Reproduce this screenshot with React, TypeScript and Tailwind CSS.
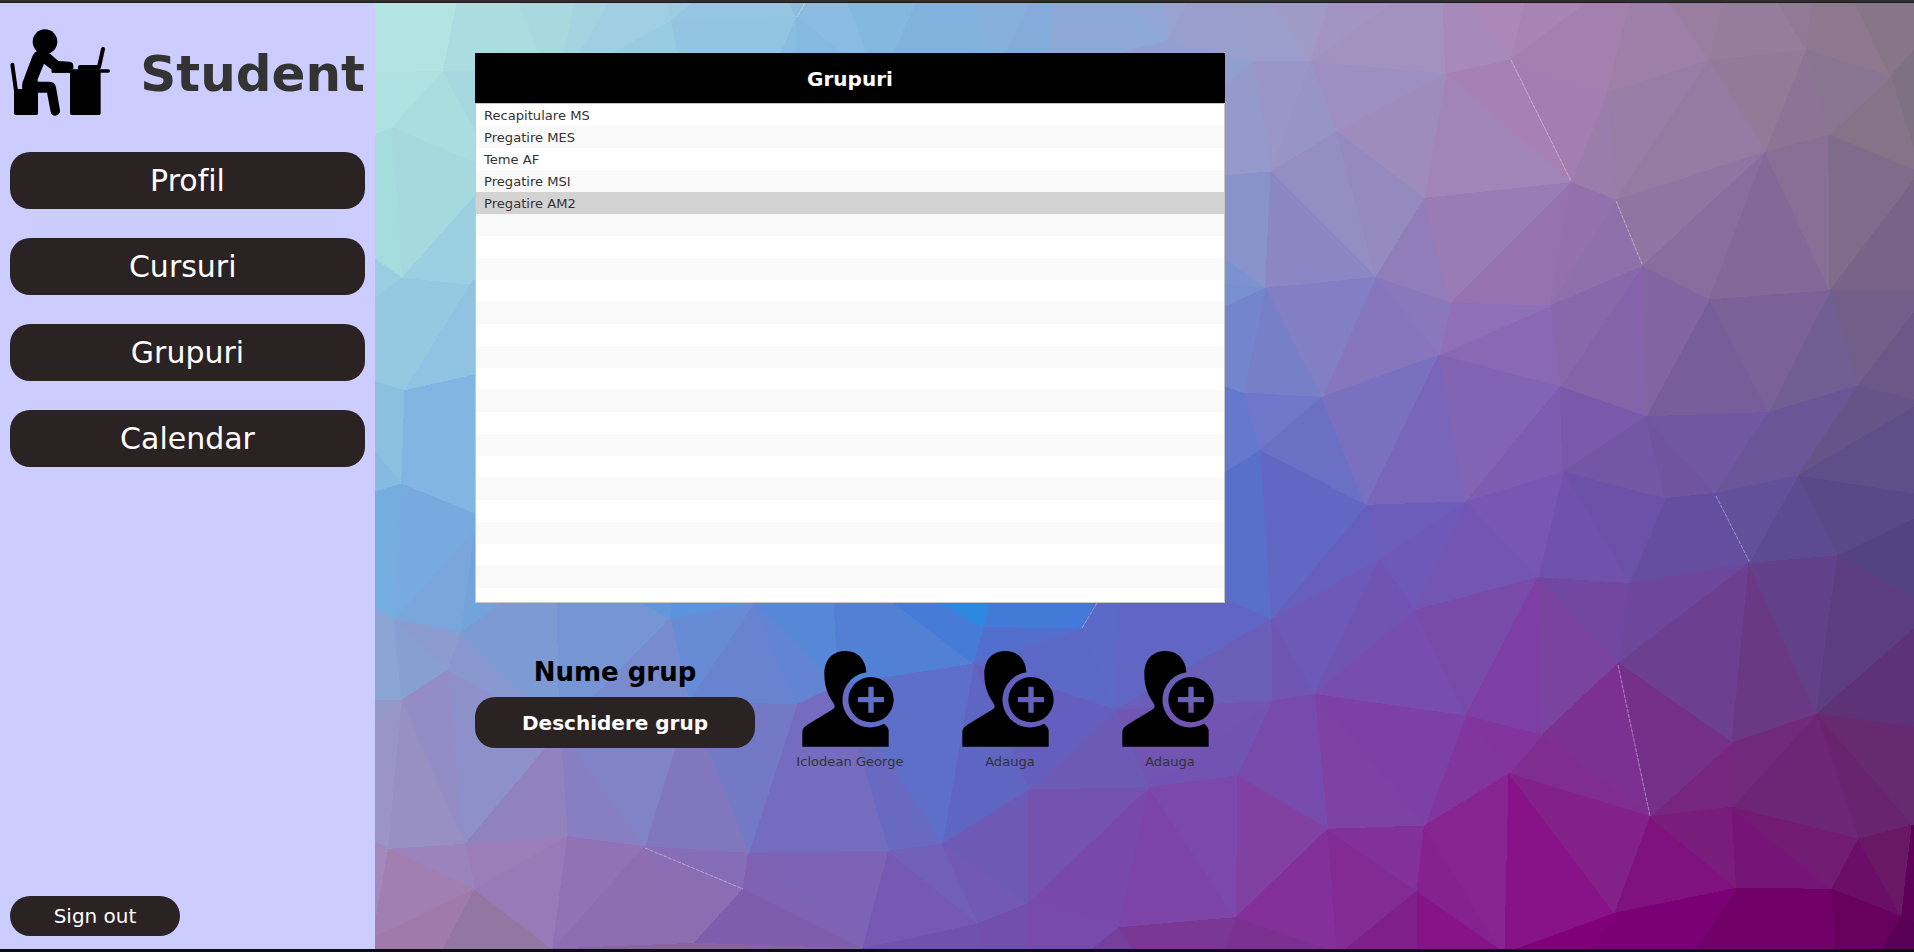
import React from "react";

type Facet = [color: string, corners: string];

/* Named mesh vertices. */
const V: Record<string, string> = {
  a0: "1253,61", a1: "1310.7,62", a2: "1336.4,131.7", a3: "1271,172", a4: "1445.8,74",
  a5: "1424.5,198.3", a6: "1511,60", a7: "1571,182.7", a8: "1607.3,92.7", a9: "1616.2,200",
  a10: "1709,60.7", a11: "1765.4,152.3", a12: "1806.5,50", a13: "1828.7,135", a14: "1890.6,76.7",
  a15: "1830,290.7", a16: "1709,300", a17: "1641.9,266.7", a18: "1549.8,306", a19: "1451,303.3",
  a20: "1375.8,277.3", a21: "1265.6,288.3", a22: "1439,355", a23: "1560,386.7", a24: "1645.8,416.7",
  a25: "1768,412.7", a26: "1857.4,386", a27: "1321.8,397.3", a28: "1243,393.3", a29: "1259.8,450.7",
  b1: "1563,472", b2: "1366,505.3", b3: "1465.7,502", b4: "1379.4,559.3", b5: "1270.9,619.3",
  b6: "1414.8,610.3", b7: "1537.8,577.7", b8: "1629.5,583.7", b9: "1664.9,498.7", b10: "1715.8,493.3",
  b11: "1749,563.3", b12: "1797.7,476", b13: "1837.5,556", b14: "1618.4,663.3", b15: "1314.3,694.3",
  b16: "1271.8,701", b17: "1465.7,716", b18: "1541.8,735.3", b19: "1732,742.7", b20: "1816.3,714.3",
  b21: "1509,773.7", b22: "1424.5,826", b23: "1327.6,829.3", b24: "1236.8,776", b25: "1650.3,816.7",
  b26: "1732,807", b27: "1858.3,839.3", b28: "1912,825", b29: "1614.9,913.3", b30: "1736.6,888.3",
  b31: "1831.8,889.3", b32: "1901.7,916.7", b33: "1417,891", b34: "1235.5,917.7",
  c1: "394,620", c2: "461.2,632.7", c3: "447.8,670", c4: "402,700", c5: "670.3,618.7",
  c6: "755,603", c7: "984,627.7", c8: "1082.6,628.7", c9: "973.6,664", c10: "797,704.7",
  c11: "1116.5,710", c12: "1028.7,790", c13: "1149.4,787.7", c14: "942,844.3", c15: "888.6,851.3",
  c16: "748.5,853.3", c17: "644.5,846.7", c18: "567.4,836.7", c19: "465,844.3", c20: "388.5,849.3",
  c21: "474.7,889.3", c22: "743,889.3", c23: "1028.7,903.3", c24: "978.6,923.7", c25: "1118.7,927.7",
  c26: "694,943.3", c27: "862.7,949", c28: "552.8,949", c29: "560,731", c30: "689,702", c31: "838.5,685",
  d1: "443.3,71.4", d2: "391.7,127.8", d3: "401.7,278.4", d4: "470,285", d5: "405,390.6", d6: "401.7,484",
  e1: "671.7,20.7", e2: "796.7,17.3", f1: "1169,40",
};

const facets: Facet[] = [
  // top left
  ["#b2e5e1", "375,3 457,3 d1 375,73"],
  ["#aee2e0", "375,73 d1 d2 375,135"],
  ["#abdde0", "457,3 519,3 541,60 475,73 d1"],
  ["#aaddde", "d1 475,131 475,163 d2"],
  ["#a5d9df", "d1 480,72 480,140"],
  ["#a5d9de", "d2 475,163 475,196 d3"],
  ["#a6dcde", "375,135 d2 d3 375,259"],
  ["#99cee2", "375,259 d3 375,298"],
  ["#9bd0e2", "d3 475,196 475,285 d4"],
  ["#95c9e1", "375,298 d3 d4 d5 375,382"],
  ["#8fc3e1", "d4 475,279 475,375 d5"],
  ["#8bc0e0", "375,382 d5 d6 375,452"],
  ["#86bae0", "375,452 d6 375,492"],
  ["#82b5e1", "d5 475,375 475,514 d6"],
  ["#76addf", "375,492 d6 c1 375,608"],
  ["#77abdf", "d6 475,514 475,530 c1"],
  ["#7ba6db", "c1 475,530 c2"],
  ["#72a3dc", "c2 475,530 505,603"],
  // top edge
  ["#a8d9df", "519,3 575,3 563,60 541,60"],
  ["#a5d4e1", "575,3 609,3 575,60 563,60"],
  ["#a0cfe1", "609,3 666,3 e1 605,60 575,60"],
  ["#9bcce0", "666,3 692,3 e1"],
  ["#99cce0", "e1 600,60 679,60"],
  ["#95c5e1", "692,3 789,3 e2 e1"],
  ["#93c4e2", "e1 e2 778,60 679,60"],
  ["#8cbde0", "789,3 805,3 e2"],
  ["#8bbbe1", "805,3 848,3 870,60 851,60 e2"],
  ["#8bbce1", "e2 778,60 796,60"],
  ["#86b9e0", "e2 796,60 851,60"],
  ["#85b8df", "848,3 916,3 891,60 870,60"],
  ["#81b2de", "916,3 976,3 988,60 891,60"],
  ["#86afdc", "976,3 1030,3 1003,60 988,60"],
  ["#84abd9", "1030,3 1054,3 1051,60 1003,60"],
  ["#8ca8d6", "1054,3 1130,3 f1 1115,60 1051,60"],
  ["#93a5d4", "1130,3 1166,3 f1"],
  ["#9aa2d0", "1166,3 1187,3 f1"],
  ["#989fcd", "f1 1187,3 1238,3 a0 1225,60"],
  ["#929fd1", "f1 1115,55 1225,56"],
  // right, upper band
  ["#9b9dca", "1238,3 1272,3 a1 a0"],
  ["#a09ac6", "1272,3 1329,3 a1"],
  ["#a494c4", "1329,3 1392,3 a1"],
  ["#a391bf", "1392,3 1443,3 a4 a1"],
  ["#a78aba", "1443,3 1470,3 a6 a4"],
  ["#ac88b7", "1470,3 1525,3 a6"],
  ["#a884b2", "1525,3 1586,3 a6"],
  ["#a480ae", "1586,3 1630,3 a8 a6"],
  ["#9d7fa7", "1630,3 1670,3 a10 a8"],
  ["#997e9f", "1670,3 1724,3 a10"],
  ["#967d9c", "1724,3 1778,3 a12 a10"],
  ["#917a96", "1778,3 1812,3 a12"],
  ["#8e788e", "1812,3 1855,3 a14 a12"],
  ["#877688", "1855,3 1914,3 1914,50 a14"],
  ["#7e7282", "a14 1914,50 1914,150"],
  ["#857388", "a14 1914,150 1914,170 a13"],
  ["#887591", "a12 a14 a13"],
  ["#927a98", "a10 a12 a11"],
  ["#8c7594", "a12 a13 a11"],
  ["#987da6", "a8 a10 a9"],
  ["#957ba1", "a10 a11 a9"],
  ["#9a7dab", "a7 a8 a9"],
  ["#a37eb0", "a6 a8 a7"],
  ["#a780b4", "a4 a6 a7"],
  ["#a185b8", "a4 a7 a5"],
  ["#9d8fc2", "a1 a4 a2"],
  ["#9e8cbd", "a2 a4 a5"],
  ["#9a96c9", "a0 a1 a3"],
  ["#9794c6", "a1 a2 a3"],
  ["#949acb", "a0 a3 1220,176 1220,85"],
  ["#8f9fd0", "a0 1220,57 1220,88"],
  ["#948ec2", "a2 a3 a20"],
  ["#948abf", "a2 a20 a5"],
  ["#8893cb", "a3 1220,176 1220,258 a21"],
  ["#7c92cf", "a21 1220,256 1220,284"],
  ["#7890d0", "a21 1220,284 1220,309"],
  ["#8b87c4", "a3 a20 a21"],
  ["#917dba", "a5 a20 a19"],
  ["#997cb6", "a5 a19 a7"],
  ["#9673b0", "a7 a19 a18"],
  ["#9271ac", "a7 a18 a9"],
  ["#8f70aa", "a9 a18 a17"],
  ["#9074a1", "a9 a17 a11"],
  ["#896d9c", "a11 a17 a16"],
  ["#836998", "a11 a16 a15"],
  ["#876f95", "a11 a15 a13"],
  ["#7e6c8a", "a13 1914,170 1914,180 a15"],
  ["#796487", "a15 1914,180 1914,290.7"],
  ["#715f8a", "a15 1914,290.7 1914,313 a26"],
  ["#6b5788", "a26 1914,313 1914,400"],
  ["#715e92", "a15 a26 a25"],
  ["#7a6198", "a16 a15 a25"],
  ["#775e9b", "a16 a25 a24"],
  ["#8165a2", "a17 a16 a24"],
  ["#8463a8", "a17 a24 a23"],
  ["#8867ab", "a18 a17 a23"],
  ["#8b68b4", "a18 a23 a22"],
  ["#8e6fb8", "a19 a18 a22"],
  ["#8b78bc", "a20 a19 a22"],
  ["#8576bd", "a20 a22 a27"],
  ["#827fc4", "a21 a20 a27"],
  ["#777fc9", "a21 a27 a28"],
  ["#7076c9", "a28 a27 a29"],
  ["#7585cd", "a21 a28 1220,388 1220,309"],
  ["#6479cc", "a28 a29 1220,476 1220,385"],
  ["#6b70c5", "a27 a29 b2"],
  ["#7970c0", "a27 a22 b2"],
  ["#7965ba", "a22 b3 b2"],
  ["#8264b5", "a22 a23 b3"],
  ["#7e5cb1", "a23 b1 b3"],
  ["#795aaa", "a23 a24 b1"],
  ["#7356a4", "a24 b9 b1"],
  ["#6f559f", "a24 b10 b9"],
  ["#7057a1", "a24 a25 b10"],
  ["#6a5598", "a25 b12 b10"],
  ["#6a5696", "a25 a26 b12"],
  ["#665489", "a26 1914,400 1914,407 b12"],
  ["#5f4e88", "b12 1914,407 1914,494"],
  // right, middle band
  ["#5a4989", "b12 1914,494 1914,519 b13"],
  ["#534383", "b13 1914,519 1914,599"],
  ["#5d4b91", "b12 b13 b11"],
  ["#63509b", "b12 b11 b10"],
  ["#654d9f", "b9 b10 b11"],
  ["#654d9f", "b9 b11 b8"],
  ["#6c51a9", "b1 b9 b8"],
  ["#7052ad", "b1 b8 b7"],
  ["#7857b3", "b1 b7 b3"],
  ["#6d5dba", "b2 b3 b4"],
  ["#6e58b8", "b3 b4 b6"],
  ["#7356b4", "b3 b6 b7"],
  ["#675fbd", "b2 b4 b5"],
  ["#6d59b8", "b4 b5 b15"],
  ["#7054b4", "b4 b6 b15"],
  ["#6267c3", "a29 b2 b5"],
  ["#5870c9", "a29 b5 1220,600 1220,476"],
  ["#7056b3", "b5 b16 b15"],
  ["#774db0", "b6 b17 b15"],
  ["#784ba9", "b6 b7 b17"],
  ["#7e3fa5", "b7 b18 b17"],
  ["#7a439f", "b7 b14 b18"],
  ["#7147a1", "b7 b8 b14"],
  ["#6c479b", "b8 b11 b14"],
  ["#6d3f91", "b11 b19 b14"],
  ["#6a3986", "b11 b20 b19"],
  ["#62418a", "b11 b13 b20"],
  ["#5c3d82", "b13 1914,599 1914,629 b20"],
  ["#5d3277", "b20 1914,629 1914,727"],
  ["#672a70", "b20 1914,727 1914,825 b28"],
  ["#68246e", "b20 b28 b27"],
  ["#6c2675", "b20 b27 b26"],
  ["#70297d", "b20 b26 b19"],
  ["#77267f", "b19 b26 b25"],
  ["#742f88", "b19 b25 b14"],
  ["#7c3191", "b14 b25 b18"],
  ["#802d92", "b18 b25 b21"],
  ["#82349c", "b17 b18 b21"],
  ["#81369e", "b17 b21 b22"],
  ["#7d40a5", "b15 b17 b22"],
  ["#7e41a4", "b15 b22 b23"],
  ["#774bad", "b15 b23 b16"],
  ["#774bab", "b16 b23 b24"],
  // right, lower band
  ["#8041a3", "b24 b23 b34"],
  ["#84309b", "b34 b23 1337,949 1326,949"],
  ["#7a318f", "b34 1223,949 1326,949"],
  ["#832b95", "b23 b33 1346,949 1337,949"],
  ["#82309a", "b23 b22 b33"],
  ["#7f1f8a", "b33 1346,949 1417,949"],
  ["#861488", "b33 1417,949 1500,949"],
  ["#862290", "b22 b33 1500,949"],
  ["#862490", "b22 b21 1505,949 1500,949"],
  ["#881389", "b21 1505,949 1517,949 b29"],
  ["#822188", "b21 b25 b29"],
  ["#80007a", "b29 1517,949 1592,949"],
  ["#7f127e", "b25 b29 b30"],
  ["#781d7b", "b25 b26 b30"],
  ["#741577", "b26 b31 b30"],
  ["#711b73", "b26 b27 b31"],
  ["#6a0e67", "b27 b31 b32"],
  ["#691866", "b27 b28 b32"],
  ["#5e0058", "b28 1914,825 1914,923 b32"],
  ["#7c0075", "b29 b30 1696,949 1592,949"],
  ["#720069", "b30 1696,949 1733,949"],
  ["#710068", "b30 b31 1835,949 1733,949"],
  ["#68005f", "b31 b32 1882,949 1835,949"],
  ["#5a0054", "b32 1914,923 1914,949 1882,949"],
  // below the table
  ["#8aa4d4", "375,608 c1 c4 375,700"],
  ["#889fd1", "c1 c3 c4"],
  ["#8b9dd0", "c1 c2 c3"],
  ["#939ac9", "375,700 c4 375,725"],
  ["#9a95c6", "c4 375,725 375,842 c20"],
  ["#9890c3", "c4 c19 c20"],
  ["#938cc5", "c3 c4 c19"],
  ["#8e91c9", "c3 c19 c29"],
  ["#8797cf", "c2 c3 c29"],
  ["#7c9ad4", "c2 505,600 557,600 c29"],
  ["#7595d4", "557,600 635,600 c5 c29"],
  ["#6198dc", "635,600 c5 672,600"],
  ["#5a94de", "c5 672,600 755,600 c6"],
  ["#678bd4", "c5 c6 c30"],
  ["#798bcf", "c5 c30 c29"],
  ["#6884d0", "c6 c30 c10"],
  ["#6383d3", "c6 c10 c31"],
  ["#5688d7", "c6 755,600 834,600 c31"],
  ["#5280d5", "834,600 890,600 c9 c31"],
  ["#467cd8", "890,600 935,600 c7 c9"],
  ["#2d88e0", "935,600 990,600 c7"],
  ["#4379d7", "990,600 c7 c8 1096,600"],
  ["#526fce", "c7 c8 c9"],
  ["#5b68c5", "c9 c8 c11"],
  ["#5b69c7", "1096,600 1120,600 c11 c8"],
  ["#6165c3", "1120,600 1228,600 b5 c11"],
  ["#6a5eb9", "b5 b16 c11"],
  ["#6b5ab6", "c11 c12 c13"],
  ["#7255b2", "c11 c13 b16"],
  ["#7053b3", "b16 b24 c13"],
  ["#645fbe", "c9 c11 c12"],
  ["#5f66c2", "c9 c12 c14"],
  ["#5e6fc9", "c31 c9 c14"],
  ["#6869c1", "c31 c14 c15"],
  ["#756bbf", "c31 c10 c15"],
  ["#746cbf", "c10 c15 c16"],
  ["#7479c5", "c30 c10 c16"],
  ["#8077bf", "c30 c16 c17"],
  ["#8083c6", "c29 c30 c17"],
  ["#877fc1", "c29 c17 c18"],
  ["#9083bd", "c29 c18 c19"],
  ["#9b7db9", "c19 c18 c21"],
  ["#9b83bd", "c20 c19 c21"],
  ["#a289bd", "375,842 c20 375,930"],
  ["#a180b1", "c20 c21 375,937 375,925"],
  ["#a07ba9", "c21 375,937 375,949 443,949"],
  ["#9476a3", "c21 443,949 c28"],
  ["#987ab8", "c18 c21 c28"],
  ["#9172b4", "c18 c17 c28"],
  ["#8d6eb1", "c17 c26 c28"],
  ["#8b6db3", "c17 c22 c26"],
  ["#856db7", "c17 c16 c22"],
  ["#8062b2", "c16 c22 c27"],
  ["#7d5dac", "c22 c26 c27"],
  ["#8a649f", "c26 c27 c28"],
  ["#7c63b5", "c16 c15 c27"],
  ["#7659b2", "c15 c24 c27"],
  ["#7160b8", "c15 c14 c24"],
  ["#7159b5", "c14 c23 c24"],
  ["#6d5ab6", "c14 c12 c23"],
  ["#7352b0", "c12 c13 c23"],
  ["#7849a9", "c13 c25 c23"],
  ["#7c44a6", "c13 c25 b34"],
  ["#7a49ab", "c13 b24 b34"],
  ["#6e52ab", "c27 c24 978,949"],
  ["#724faa", "c24 c23 1029,949 978,949"],
  ["#764bab", "c23 c25 1092,949 1029,949"],
  ["#75409d", "c25 1092,949 1134,949"],
  ["#7a3894", "c25 b34 1223,949 1134,949"],
];

const cracks = [
  "M1511 60L1571 181",
  "M1616 201L1642 264",
  "M1716 496L1749 561",
  "M1618 665L1650 816",
  "M645 848L743 889",
  "M1097 603L1082 628",
  "M805 3L797 17",
];

const resolve = (corners: string) =>
  corners.split(" ").map((c) => V[c] ?? c).join(" ");

function Backdrop() {
  return (
    <svg
      viewBox="375 3 1539 946"
      preserveAspectRatio="none"
      className="col-start-1 row-start-1 h-full w-full"
      aria-hidden="true"
    >
      <rect x="375" y="3" width="1539" height="946" fill="#7d6bb8" />
      <g shapeRendering="crispEdges" strokeWidth="1" strokeLinejoin="round">
        {facets.map(([color, corners], i) => (
          <polygon key={i} points={resolve(corners)} fill={color} stroke={color} />
        ))}
      </g>
      {cracks.map((d) => (
        <path key={d} d={d} stroke="#ffffff" strokeOpacity="0.38" strokeWidth="1" strokeDasharray="4 1" fill="none" />
      ))}
    </svg>
  );
}

function StudentIcon() {
  return (
    <svg viewBox="30 75 300 285" className="h-[95px] w-[100px] shrink-0" fill="#000">
      <circle cx="135" cy="125" r="37" />
      <path d="M37 194L48 272" stroke="#000" strokeWidth="12" strokeLinecap="round" />
      <path d="M48 267H108Q114 267 114 273V340Q114 345 109 345H47Q42 345 42 340V267Z" />
      <path d="M112 153C104 156 99 163 96 172L68 246C66 253 66 261 67 268L90 278H141L152 335Q154 347 166 347Q181 345 180 331L168 262Q165 246 149 245H116Q111 245 113 238L132 191L155 209V218H212V208H220V198Q220 186 209 185L175 183L150 161Z" />
      <path d="M210 218H156Q153 212 158 208H325Q330 208 330 213Q330 218 325 218H302V340Q302 345 297 345H215Q210 345 210 340Z" />
      <path d="M240 195H296V209H234V201Q234 195 240 195Z" />
      <path d="M309 147L297 201" stroke="#000" strokeWidth="12" strokeLinecap="round" />
    </svg>
  );
}

function AddUserIcon() {
  return (
    <svg viewBox="60 60 300 300" className="size-[100px]" fill="#000">
      <path d="M259 127C257 90 235 63 196 63C155 63 133 92 133 132C133 166 143 192 155 211C161 220 164 225 164 231C164 234 160 237 156 239L86 282C73 290 67 296 67 309V350H326V302C326 293 321 289 312 281A83 83 0 1 1 259 127Z" />
      <path
        fillRule="evenodd"
        d="M273 141A68 68 0 1 0 273 277A68 68 0 1 0 273 141ZM265 170H281V201H312V217H281V248H265V217H234V201H265Z"
      />
    </svg>
  );
}

const navItems = ["Profil", "Cursuri\u00a0", "Grupuri", "Calendar"];

const groups = [
  "Recapitulare MS",
  "Pregatire MES",
  "Teme AF",
  "Pregatire MSI",
  "Pregatire AM2",
];
const selectedGroup = 4;
const rowCount = 23;

const members = ["Iclodean George", "Adauga", "Adauga"];

function Sidebar() {
  return (
    <aside className="flex w-[375px] shrink-0 flex-col bg-[#ccccff] px-[10px] pt-[22px] pb-[13px]">
      <div className="flex h-[95px] items-center justify-between">
        <StudentIcon />
        <h1 className="pt-[2px] text-[50px] leading-none font-bold text-[#333333]">Student</h1>
      </div>
      <nav className="mt-8 flex flex-col gap-[29px]">
        {navItems.map((item) => (
          <button
            key={item}
            className="h-[57px] rounded-[20px] bg-[#2b2223] text-[30px] leading-none text-white [font-variant-ligatures:none]"
          >
            {item}
          </button>
        ))}
      </nav>
      <button className="mt-auto h-10 w-[170px] rounded-[20px] bg-[#2b2223] text-xl leading-none text-white">
        Sign out
      </button>
    </aside>
  );
}

function GroupTable() {
  return (
    <section className="h-[550px] w-[750px]">
      <h2 className="flex h-[50px] items-center justify-center bg-black pt-[2px] text-xl font-bold text-white">
        Grupuri
      </h2>
      <ul className="h-[500px] overflow-hidden border border-[#c8c8c8] bg-white text-[13.1px] leading-4 text-[#333333]">
        {Array.from({ length: rowCount }, (_, i) => (
          <li
            key={i}
            className={`flex h-[22px] items-center px-2 pt-[2px] ${
              i === selectedGroup ? "bg-[#d3d3d3]" : i % 2 ? "bg-[#f9f9f9]" : "bg-white"
            }`}
          >
            {groups[i]}
          </li>
        ))}
      </ul>
    </section>
  );
}

function GroupActions() {
  return (
    <section className="mt-[47px] flex w-[755px]">
      <div className="flex w-[280px] shrink-0 flex-col items-center pt-px">
        <h3 className="mb-[5px] flex h-[41px] items-center text-[26px] leading-none font-bold text-black">
          Nume grup
        </h3>
        <button className="h-[51px] w-full rounded-[20px] bg-[#2b2223] text-xl leading-none font-bold text-white">
          Deschidere grup
        </button>
      </div>
      <div className="ml-[35px] flex shrink-0">
        {members.map((name, i) => (
          <figure key={i} className="flex w-[120px] flex-col items-center not-first:ml-10">
            <AddUserIcon />
            <figcaption className="mt-1 text-[13.1px] leading-4 whitespace-nowrap text-[#333333]">{name}</figcaption>
          </figure>
        ))}
      </div>
    </section>
  );
}

export default function App() {
  return (
    <div className="flex h-[952px] w-[1914px] flex-col overflow-hidden font-['DejaVu_Sans',sans-serif]">
      <div className="h-[3px] shrink-0 border-b border-[#1a1a1a] bg-[#2f2f2f]" />
      <div className="flex min-h-0 flex-1">
        <Sidebar />
        <main className="grid min-w-0 flex-1 grid-cols-1 grid-rows-1">
          <Backdrop />
          <div className="z-10 col-start-1 row-start-1 pt-[50px] pl-[100px]">
            <GroupTable />
            <GroupActions />
          </div>
        </main>
      </div>
      <div className="h-[3px] shrink-0 bg-[#0c0d14]" />
    </div>
  );
}
